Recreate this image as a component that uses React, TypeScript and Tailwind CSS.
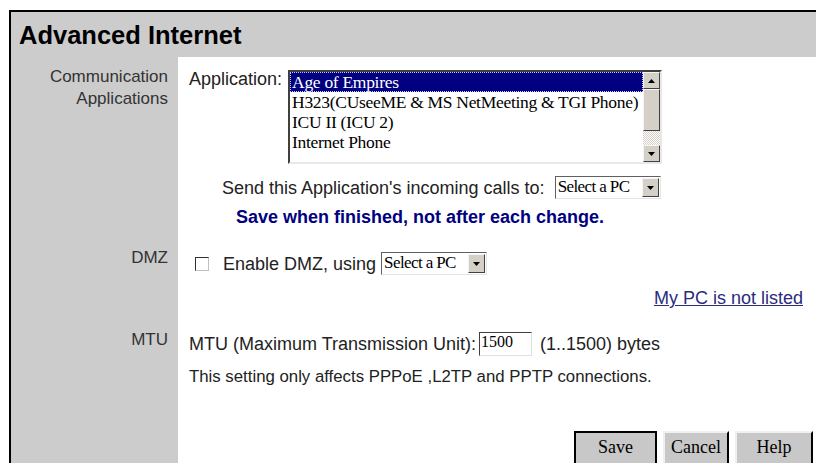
import React from 'react';

const apps = [
  'Age of Empires',
  'H323(CUseeME & MS NetMeeting & TGI Phone)',
  'ICU II (ICU 2)',
  'Internet Phone',
];

const Arrow: React.FC<{ up?: boolean }> = ({ up }) => (
  <svg width="7" height="4" viewBox="0 0 7 4" className={up ? 'rotate-180' : ''}>
    <path d="M0 0h7L3.5 4z" fill="#000" />
  </svg>
);

// Win98-style raised square button used by scrollbars and dropdowns
const BevelButton: React.FC<{ up?: boolean; className?: string }> = ({ up, className }) => (
  <div
    className={`flex items-center justify-center bg-[#d4d0c8] border border-t-[#f4f4f4] border-l-[#f4f4f4] border-r-[#404040] border-b-[#404040] ${className ?? ''}`}
  >
    <Arrow up={up} />
  </div>
);

const PcSelect: React.FC = () => (
  <div className="flex h-[23px] w-[106px] border border-t-[#606060] border-l-[#606060] border-r-[#e4e4e4] border-b-[#e4e4e4] bg-white p-[1px]">
    <span className="flex-1 pl-[1px] text-[17px] leading-[18px] tracking-[-0.6px] text-black font-['Liberation_Serif',serif] whitespace-nowrap overflow-hidden">
      Select a PC
    </span>
    <BevelButton className="w-[17px]" />
  </div>
);

const AppList: React.FC = () => (
  <div className="flex h-[94px] w-[374px] border-2 border-t-[#404040] border-l-[#404040] border-r-[#e8e8e8] border-b-[#e8e8e8] bg-white">
    <ul className="flex-1 font-['Liberation_Serif',serif] text-[17.5px] leading-[20px] text-black">
      {apps.map((a, i) => (
        <li
          key={a}
          className={`pl-[2px] whitespace-nowrap tracking-[-0.3px] ${i === 0 ? 'bg-[#000080] text-white outline outline-1 outline-dotted outline-[#c8c8ff] -outline-offset-1' : ''}`}
        >
          {a}
        </li>
      ))}
    </ul>
    <div className="flex w-[17px] flex-col">
      <BevelButton up className="h-[17px]" />
      <div className="h-[42px] bg-[#d4d0c8] border border-t-[#f4f4f4] border-l-[#f4f4f4] border-r-[#404040] border-b-[#404040]" />
      <div className="flex-1 bg-[repeating-conic-gradient(#ffffff_0_25%,#d4d0c8_0_50%)] bg-[length:2px_2px]" />
      <BevelButton className="h-[17px]" />
    </div>
  </div>
);

const Label: React.FC<{ children: React.ReactNode; className?: string }> = ({ children, className }) => (
  <div className={`bg-[#cccccc] pr-[10px] text-right text-[17px] leading-[22px] text-[#333] ${className ?? ''}`}>
    {children}
  </div>
);

const WinButton: React.FC<{ label: string; primary?: boolean; w: string }> = ({ label, primary, w }) => (
  <button
    className={`${w} h-[34px] shrink-0 bg-[#c8c8c8] pb-[2px] font-['Liberation_Serif',serif] text-[18px] leading-[28px] text-black ${
      primary
        ? 'border-2 border-black'
        : 'border-2 border-t-[#f0f0f0] border-l-[#f0f0f0] border-r-black border-b-black'
    }`}
  >
    {label}
  </button>
);

export default function App() {
  return (
    <div className="w-[816px] h-[463px] overflow-hidden bg-white pt-[10px] font-['Liberation_Sans',Arial,sans-serif]">
      <div className="ml-[9px] border-t-2 border-l-2 border-black">
        {/* Title bar */}
        <div className="h-[45px] bg-[#cccccc] pl-[8px] pt-[9px]">
          <h1 className="text-[25.5px] font-bold leading-[28px] text-black">Advanced Internet</h1>
        </div>

        <div className="grid grid-cols-[167px_1fr]">
          {/* Communication Applications */}
          <Label className="pt-[9px]">
            Communication
            <br />
            Applications
          </Label>
          <div className="bg-white pt-[11px] pl-[11px] text-[18px] leading-[22px] text-[#222]">
            <div className="flex items-start gap-[6px]">
              <span>Application:</span>
              <div className="mt-[2px]">
                <AppList />
              </div>
            </div>
            <div className="mt-[12px] ml-[33px] flex items-center gap-[10px]">
              <span>Send this Application&apos;s incoming calls to:</span>
              <PcSelect />
            </div>
            <p className="mt-[7px] ml-[47px] font-bold text-[#000080]">
              Save when finished, not after each change.
            </p>
          </div>

          {/* DMZ */}
          <Label className="pt-[19px]">DMZ</Label>
          <div className="bg-white pt-[24px] pl-[17px] text-[18px] leading-[22px] text-[#222]">
            <div className="flex items-center">
              <span className="h-[14px] w-[14px] border-[1.5px] border-t-[#303030] border-l-[#303030] border-r-[#c0c0c0] border-b-[#c0c0c0] bg-white" />
              <span className="ml-[14px]">Enable DMZ, using</span>
              <span className="ml-[5px]">
                <PcSelect />
              </span>
            </div>
            <div className="mt-[12px] pr-[13px] text-right">
              <a className="underline text-[#2b2b80]">My PC is not listed</a>
            </div>
          </div>

          {/* MTU */}
          <Label className="pt-[20px]">MTU</Label>
          <div className="bg-white pt-[23px] pl-[11px] text-[18px] leading-[22px] text-[#222]">
            <div className="flex items-center">
              <span>MTU (Maximum Transmission Unit):</span>
              <span className="ml-[3px] flex h-[24px] w-[53px] items-start border border-t-[#404040] border-l-[#404040] border-r-[#e0e0e0] border-b-[#e0e0e0] pl-[1px] font-['Liberation_Serif',serif] text-[16px] leading-[18px] text-black">
                1500
              </span>
              <span className="ml-[8px]">(1..1500) bytes</span>
            </div>
            <p className="mt-[11px] text-[16.8px] leading-[20px]">
              This setting only affects PPPoE ,L2TP and PPTP connections.
            </p>
          </div>

          {/* Footer buttons */}
          <div className="bg-[#cccccc]" />
          <div className="flex justify-end gap-[6px] bg-white pt-[44px] pr-[3px]">
            <WinButton label="Save" primary w="w-[83px]" />
            <WinButton label="Cancel" w="w-[66px]" />
            <WinButton label="Help" w="w-[78px]" />
          </div>
        </div>
      </div>
    </div>
  );
}
